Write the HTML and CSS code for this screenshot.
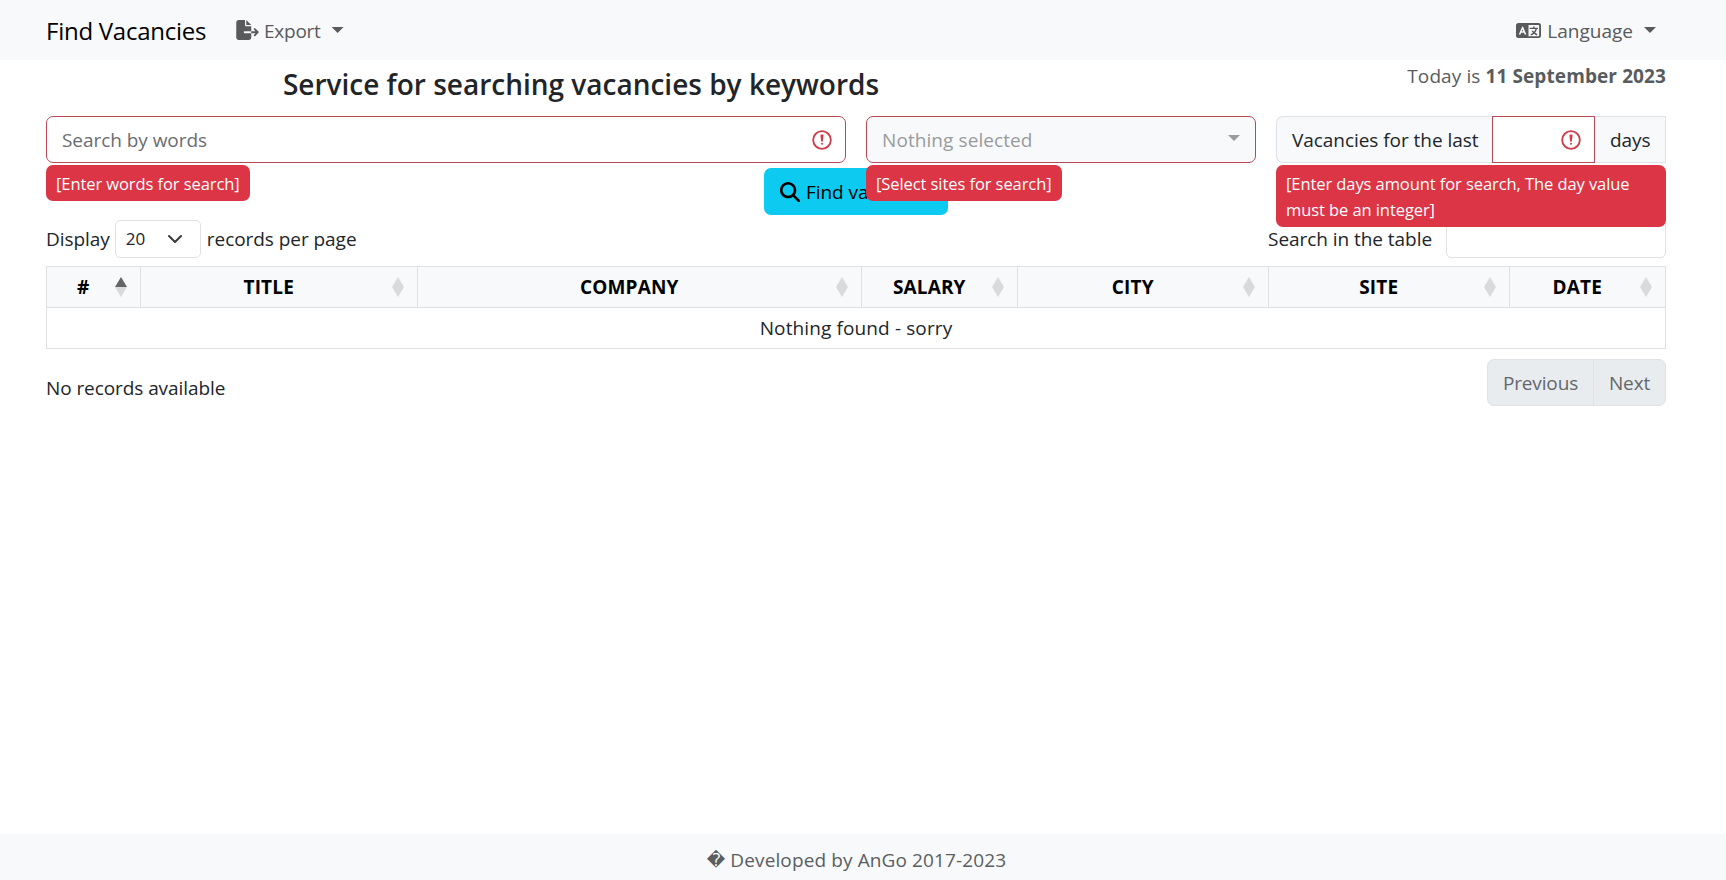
FILE: index.html
```html
<!DOCTYPE html>
<html lang="en">
<head>
<meta charset="utf-8">
<title>Find Vacancies</title>
<link rel="stylesheet" href="styles.css">
</head>
<body>
<nav class="navbar">
  <a class="brand">Find Vacancies</a>
  <a class="nav-link">
    <svg class="icon-export" viewBox="0 0 576 512"><path d="M0 64C0 28.700 28.700 0 64 0H224V128c0 17.700 14.300 32 32 32H384V288H216c-13.300 0-24 10.700-24 24s10.700 24 24 24H384V448c0 35.300-28.700 64-64 64H64c-35.300 0-64-28.700-64-64V64zM384 336V288H494.100l-39-39c-9.400-9.400-9.400-24.600 0-33.900s24.600-9.400 33.900 0l80 80c9.400 9.400 9.400 24.600 0 33.900l-80 80c-9.400 9.400-24.600 9.400-33.900 0s-9.400-24.600 0-33.900l39-39H384zm0-208H256V0L384 128z"/></svg>
    <span class="nav-text export-text">Export</span><i class="caret"></i>
  </a>
  <a class="nav-link nav-end">
    <svg class="icon-lang" viewBox="0 0 640 384"><path fill-rule="evenodd" d="M64 0H576a64 64 0 0 1 64 64V320a64 64 0 0 1-64 64H64a64 64 0 0 1-64-64V64A64 64 0 0 1 64 0zM320 48V336H576a16 16 0 0 0 16-16V64a16 16 0 0 0-16-16zM160 92L70 292H115L133 250H203L221 292H266L178 92zM168 165L187 212H149z"/><path d="M436 88h38v32h88v36h-26c-9 38-25 68-46 94 19 14 39 25 61 34l-16 34c-27-11-52-26-74-43-23 18-49 33-77 44l-16-34c25-10 47-22 66-36-14-15-26-31-36-49h41c6 9 13 17 22 25 16-20 28-42 35-69H350v-36h86z"/></svg>
    <span class="nav-text">Language</span><i class="caret"></i>
  </a>
</nav>

<main class="page">
  <header class="intro">
    <h1>Service for searching vacancies by keywords</h1>
    <p class="today">Today is <strong>11 September 2023</strong></p>
  </header>

  <form class="filters">
    <div class="field">
      <div class="control invalid"><span class="placeholder">Search by words</span>
        <svg class="icon-error" viewBox="0 0 12 12"><circle cx="6" cy="6" r="5.300"/><path d="M5.600 3.200h.8L6 6.500z"/><circle class="dot" cx="6" cy="8.200" r=".6"/></svg></div>
      <div class="tip">[Enter words for search]</div>
    </div>
    <div class="field">
      <div class="control invalid picker"><span>Nothing selected</span><i class="caret"></i></div>
      <div class="tip">[Select sites for search]</div>
    </div>
    <div class="field">
      <div class="group">
        <div class="addon addon-first">Vacancies for the last</div>
        <div class="control invalid days-input">
          <svg class="icon-error" viewBox="0 0 12 12"><circle cx="6" cy="6" r="5.300"/><path d="M5.600 3.200h.8L6 6.500z"/><circle class="dot" cx="6" cy="8.200" r=".6"/></svg></div>
        <div class="addon addon-last">days</div>
      </div>
      <div class="tip tip-wide">[Enter days amount for search, The day value must be an integer]</div>
    </div>
  </form>

  <div class="actions">
    <button class="find" type="button">
      <svg class="icon-search" viewBox="0 0 512 512"><path d="M416 208c0 45.900-14.900 88.300-40 122.700L502.600 457.400c12.500 12.500 12.500 32.800 0 45.300s-32.800 12.500-45.300 0L330.700 376c-34.400 25.200-76.800 40-122.700 40C93.100 416 0 322.900 0 208S93.100 0 208 0S416 93.100 416 208zM208 352a144 144 0 1 0 0-288 144 144 0 1 0 0 288z"/></svg>
      <span>Find vacancies</span>
    </button>
  </div>

  <div class="table-tools">
    <span>Display</span>
    <div class="length"><span>20</span><svg class="icon-chevron" viewBox="0 0 16 16"><path d="m2 5 6 6 6-6"/></svg></div>
    <span class="records">records per page</span>
    <label class="table-search"><span>Search in the table</span><span class="search-box"></span></label>
  </div>

  <table class="vacancies">
    <colgroup><col class="c1"><col class="c2"><col class="c3"><col class="c4"><col class="c5"><col class="c6"><col class="c7"></colgroup>
    <thead><tr>
      <th><div class="th"><span>#</span><svg class="sort" viewBox="0 0 12 20"><path class="up" d="M6 0l6 10H0z"/><path d="M6 20L0 10h12z"/></svg></div></th>
      <th><div class="th"><span>TITLE</span><svg class="sort" viewBox="0 0 12 20"><path d="M6 0l6 10-6 10L0 10z"/></svg></div></th>
      <th><div class="th"><span>COMPANY</span><svg class="sort" viewBox="0 0 12 20"><path d="M6 0l6 10-6 10L0 10z"/></svg></div></th>
      <th><div class="th"><span>SALARY</span><svg class="sort" viewBox="0 0 12 20"><path d="M6 0l6 10-6 10L0 10z"/></svg></div></th>
      <th><div class="th"><span>CITY</span><svg class="sort" viewBox="0 0 12 20"><path d="M6 0l6 10-6 10L0 10z"/></svg></div></th>
      <th><div class="th"><span>SITE</span><svg class="sort" viewBox="0 0 12 20"><path d="M6 0l6 10-6 10L0 10z"/></svg></div></th>
      <th><div class="th"><span>DATE</span><svg class="sort" viewBox="0 0 12 20"><path d="M6 0l6 10-6 10L0 10z"/></svg></div></th>
    </tr></thead>
    <tbody><tr><td colspan="7">Nothing found - sorry</td></tr></tbody>
  </table>

  <div class="table-foot">
    <span class="info">No records available</span>
    <div class="pager"><span class="pg pg-prev">Previous</span><span class="pg pg-next">Next</span></div>
  </div>
</main>

<footer class="footer"><span class="mark">&#xFFFD;</span><span>Developed by AnGo 2017-2023</span></footer>
</body>
</html>
```
FILE: styles.css
```css
* { box-sizing: border-box; }
body {
  margin: 0;
  height: 880px;
  display: flex;
  flex-direction: column;
  background: #fff;
  color: #212529;
  font: 19px/30px "Open Sans", "Noto Sans", sans-serif;
  letter-spacing: -.05px;
  white-space: nowrap;
}
svg { display: block; flex: none; }
.caret { width: 12px; height: 6px; background: currentColor; clip-path: polygon(0 0, 100% 0, 50% 100%); }

.navbar { height: 60px; padding: 0 60px 0 46px; background: #f8f9fa; display: flex; align-items: center; }
.brand { font-size: 24px; letter-spacing: -.26px; color: #000; width: 190px; padding-top: 2px; }
.nav-link { display: flex; align-items: center; color: #595a5b; letter-spacing: 0; }
.nav-link svg { fill: #595a5b; }
.nav-link .caret { margin: 0 10px 0 11px; }
.nav-end { margin-left: auto; }
.icon-export { width: 23px; height: 20px; margin-right: 5px; }
.icon-lang { width: 25px; height: 15px; margin-right: 6px; }
.nav-text { padding-top: 2px; }
.export-text { letter-spacing: -.25px; }

.page { padding: 0 60px 0 46px; flex: 1; }
.intro { display: flex; height: 56px; }
h1 { margin: 4px 0 0; width: 1070px; font-size: 28px; line-height: 40px; font-weight: 600; letter-spacing: 0; text-align: center; }
.today { margin: 1px 0 0 auto; color: #595c5f; letter-spacing: .1px; }

.filters { display: grid; grid-template-columns: 800px 390px 390px; gap: 20px; height: 47px; }
.field { position: relative; }
.control { height: 47px; border: 1px solid #b94a55; border-radius: 7px; padding: 0 13px 0 15px; display: flex; align-items: center; background: #fff; }
.placeholder { color: #6a6d70; }
.icon-error { width: 20px; height: 20px; margin-left: auto; fill: #dc3545; stroke: #cf3c4c; stroke-width: 1.1; stroke-linejoin: round; }
.icon-error > circle:first-child { fill: none; }
.icon-error .dot { stroke: none; }
.picker { background: #f8f9fa; color: #999b9d; letter-spacing: .08px; }
.picker .caret { margin: -3px 2px 0 auto; }
.group { display: flex; }
.addon { height: 47px; display: flex; align-items: center; background: #f8f9fa; border: 1px solid #dee2e6; }
.addon-first { width: 216px; padding-left: 15px; border-right: 0; border-radius: 7px 0 0 7px; }
.addon-last { flex: 1; padding-left: 15px; border-left: 0; }
.days-input { width: 103px; border-radius: 0; }
.tip { position: absolute; z-index: 5; left: 0; top: 49px; padding: 6px 10px 4px; border-radius: 7px; background: #dc3545; color: #fff; font-size: 16.500px; line-height: 26px; letter-spacing: -.08px; }
.tip-wide { width: 390px; white-space: normal; }

.actions { display: flex; padding-left: 718px; margin-top: 5px; }
.find { width: 184px; height: 47px; padding: 0 16px; border: 0; border-radius: 7px; background: #0dcaf0; color: #000; font: inherit; letter-spacing: -.05px; display: flex; align-items: center; gap: 6px; }
.icon-search { width: 20px; height: 20px; }

.table-tools { display: flex; align-items: center; height: 38px; margin-top: 5px; }
.length { width: 86px; height: 38px; margin: 0 6px 0 5px; padding: 0 17px 0 10px; border: 1px solid #dee2e6; border-radius: 5px; font-size: 17px; display: flex; align-items: center; justify-content: space-between; }
.icon-chevron { width: 16px; height: 16px; fill: none; stroke: #343a40; stroke-width: 2; stroke-linecap: round; stroke-linejoin: round; }
.table-search { margin-left: auto; display: flex; align-items: center; gap: 14px; }
.search-box { width: 220px; height: 38px; border: 1px solid #dee2e6; border-radius: 5px; }

.vacancies { width: 1620px; margin-top: 8px; table-layout: fixed; border-collapse: collapse; text-align: center; }
.vacancies th, .vacancies td { height: 41px; padding: 0; border: 1px solid #dee0e2; }
.vacancies th { background: #f8f9fa; color: #000; font-weight: 700; letter-spacing: .15px; }
.vacancies td { letter-spacing: .12px; }
.c1 { width: 94px; } .c2 { width: 277px; } .c3 { width: 444px; } .c4 { width: 156px; } .c5 { width: 251px; } .c6 { width: 241px; }
.th { display: flex; align-items: center; padding: 0 13.500px 0 5px; }
.th span { flex: 1; }
.sort { width: 12px; height: 20px; fill: #d9dadb; }
.sort .up { fill: #636465; }

.table-foot { display: flex; align-items: flex-start; justify-content: space-between; margin-top: 10px; }
.info { margin-top: 14px; letter-spacing: -.08px; }
.pager { display: flex; height: 47px; border: 1px solid #dee2e6; border-radius: 7px; background: #e9ecef; color: #63676b; letter-spacing: -.15px; }
.pg { display: flex; align-items: center; justify-content: center; }
.pg-prev { width: 106px; border-right: 1px solid #dee2e6; }
.pg-next { width: 71px; }

.footer { height: 46px; background: #f8f9fa; color: #5b5e61; display: flex; align-items: center; justify-content: center; gap: 5px; padding: 5px 13px 0 0; letter-spacing: .12px; }
.mark { font-family: "DejaVu Sans", sans-serif; font-size: 18px; }
```
